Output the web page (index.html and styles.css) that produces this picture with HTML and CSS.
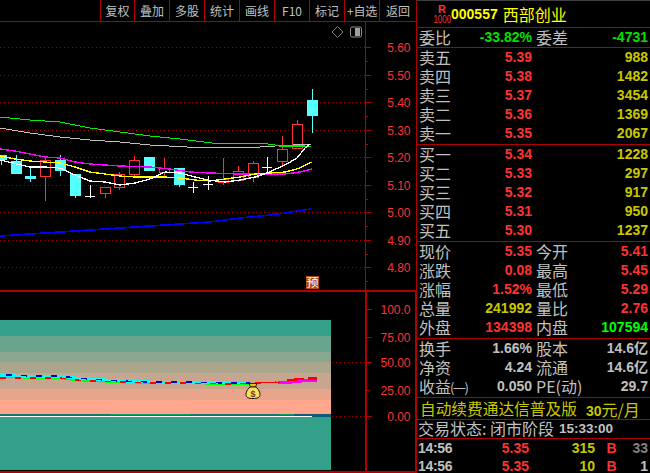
FILE: index.html
```html
<!DOCTYPE html>
<html lang="zh">
<head>
<meta charset="utf-8">
<title>000557 西部创业</title>
<link rel="stylesheet" href="styles.css">
</head>
<body>
<div class="app">
  <section class="main">
    <nav class="toolbar">
      <span class="tool">复权</span><span class="tool">叠加</span><span class="tool">多股</span><span class="tool">统计</span><span class="tool">画线</span><span class="tool">F10</span><span class="tool">标记</span><span class="tool tool-tight">+自选</span><span class="tool">返回</span>
    </nav>
    <svg class="pane price-pane" viewBox="0 22 416 268" width="416" height="268" shape-rendering="crispEdges">
      <path class="grid" d="M0 47.5H365M0 75.5H365M0 102.5H365M0 130.5H365M0 157.5H365M0 185.5H365M0 212.5H365M0 240.5H365M0 267.5H365"/>
      <path class="axis" d="M365.5 22V290"/>
      <path class="axis" d="M366 47.5H371M366 75.5H371M366 102.5H371M366 130.5H371M366 157.5H371M366 185.5H371M366 212.5H371M366 240.5H371M366 267.5H371M366 61.5H368M366 89.5H368M366 116.5H368M366 144.5H368M366 171.5H368M366 199.5H368M366 226.5H368M366 254.5H368M366 281.5H368"/>
      <g class="tick-label">
        <text x="410.500" y="52">5.60</text><text x="410.500" y="80">5.50</text><text x="410.500" y="107">5.40</text><text x="410.500" y="135">5.30</text><text x="410.500" y="162">5.20</text><text x="410.500" y="190">5.10</text><text x="410.500" y="217">5.00</text><text x="410.500" y="245">4.90</text><text x="410.500" y="272">4.80</text>
      </g>

      <g class="wick-c">
        <path d="M1.5 160V165M16.5 155V161M30.5 168V182M60.5 155V176M75.5 196V198M179.5 185V187M312.5 89V133"/>
      </g>
      <g class="body-c">
        <rect x="-4" y="155" width="11" height="5"/><rect x="11" y="161" width="11" height="13"/><rect x="25" y="176" width="11" height="3"/><rect x="55" y="160" width="11" height="11"/><rect x="70" y="174" width="11" height="22"/><rect x="144" y="157" width="11" height="14"/><rect x="174" y="168" width="11" height="17"/><rect x="307" y="100" width="11" height="16"/>
      </g>
      <g class="wick-r">
        <path d="M45.5 157V160M45.5 177V201M105.5 194V198M119.5 172V174M119.5 188V190M134.5 156V160M134.5 175V177M164.5 158V168M164.5 172V177M223.5 158V179M223.5 182V185M238.5 166V171M238.5 180V182M253.5 161V163M253.5 177V182M282.5 136V149M282.5 161V165M297.5 120V124M297.5 148V149"/>
      </g>
      <g class="body-r">
        <rect x="40.5" y="160.5" width="10" height="16"/><rect x="100.5" y="187.5" width="10" height="6"/><rect x="114.5" y="174.5" width="10" height="13"/><rect x="129.5" y="160.5" width="10" height="14"/><rect x="159.5" y="168.5" width="10" height="4"/><rect x="218.5" y="179.5" width="10" height="3"/><rect x="233.5" y="171.5" width="10" height="9"/><rect x="248.5" y="163.5" width="10" height="14"/><rect x="277.5" y="149.5" width="10" height="12"/><rect x="292.5" y="124.5" width="10" height="24"/>
      </g>
      <path class="doji" d="M85 196.5H95M90.5 185V198M188 187.5H198M193.5 182V193M203 184.5H213M208.5 176V190M262 167.5H272M267.5 157V174"/>

      <polyline class="ma ma-gray" points="0,128 30,133 60,137 90,140 120,142 150,145 187,147 260,147 275,146 311,144"/>
      <polyline class="ma ma-green" points="0,117 30,120 60,122 90,128 120,132 150,136 180,139 220,144 230,143 260,143 275,145 290,146 311,147"/>
      <rect class="ma-green-fill" x="279" y="145" width="26" height="2"/>
      <polyline class="ma ma-blue" points="0,236 30,234 60,232 90,230 120,228 150,226 180,224 210,222 240,218 270,215 285,213 311,209"/>
      <polyline class="ma ma-magenta" points="0,149 15,151 30,154 45,157 60,158 75,162 90,164 105,165 120,166 150,167 170,169 190,172 210,173 240,174 285,174 300,172 312,169"/>
      <polyline class="ma ma-yellow" points="0,156 15,159 30,161 45,162 60,163 75,167 90,172 105,174 120,176 135,177 150,177 165,177 180,178 195,180 210,181 225,179 240,177 255,174 270,173 285,172 297,169 312,162"/>
      <polyline class="ma ma-white" points="0,160 30,167 45,167 60,168 75,175 90,181 105,182 120,185 135,183 150,179 165,172 180,173 195,177 208,180 225,182 240,180 255,177 267,173 285,165 297,158 305,148 310,144"/>

      <path class="diamond" d="M337.5 26.500L343 32L337.5 37.500L332 32Z" shape-rendering="auto"/>
      <rect class="toggle" x="350.5" y="27" width="11" height="10" rx="1.5" shape-rendering="auto"/>
      <rect class="toggle-fill" x="355" y="28" width="5" height="8"/>
      <rect class="badge" x="306" y="276" width="13" height="13"/>
      <text class="badge-text" x="312.5" y="287">预</text>
    </svg>
    <svg class="pane ind-pane" viewBox="0 290 416 183" width="416" height="183" shape-rendering="crispEdges">
      <rect class="b1" x="0" y="320" width="331" height="16"/>
      <rect class="b2" x="0" y="336" width="331" height="16"/>
      <rect class="b3" x="0" y="352" width="331" height="10"/>
      <rect class="b4" x="0" y="362" width="331" height="11"/>
      <rect class="b5" x="0" y="373" width="331" height="16"/>
      <rect class="b6" x="0" y="389" width="331" height="11"/>
      <rect class="b7" x="0" y="400" width="331" height="14"/>
      <rect class="b1" x="0" y="414" width="331" height="56"/>
      <rect class="dk" x="0" y="414" width="331" height="2"/>
      <rect class="gr" x="110" y="414" width="80" height="1"/>
      <rect class="gr" x="279" y="414" width="15" height="1"/>
      <rect class="dkb" x="294" y="414" width="37" height="3"/>
      <rect class="wh" x="0" y="416" width="312" height="1"/>

      <polyline class="rb rb-green" points="0,377 15,377 30,378 60,378 75,380 90,381 120,382 150,383 180,383 230,384 250,384"/>
      <polyline class="rb rb-cyan" points="0,375 15,376 30,376 60,376 75,378 90,379 120,381 150,382 180,382 230,383 250,383"/>
      <polyline class="rb-dash rb-red" points="0,378 15,378 30,378 60,378 75,380 90,381 120,382 150,383 180,383 230,384 260,383 280,382"/>
      <polyline class="rb-dash rb-blue" points="6,375 15,375 30,376 60,376 75,378 90,379 120,381 150,382 180,382 230,383 250,383"/>
      <rect class="m" x="278" y="381" width="14" height="3"/>
      <rect class="m" x="292" y="380" width="10" height="3"/>
      <rect class="m" x="302" y="379" width="15" height="3"/>
      <rect class="rd" x="260" y="382" width="20" height="1"/>
      <rect class="rd" x="287" y="379" width="10" height="2"/>
      <rect class="rd" x="294" y="378" width="10" height="2"/>
      <rect class="rd" x="308" y="377" width="9" height="3"/>

      <g class="bag" shape-rendering="auto">
        <path class="bag-neck" d="M249 383.5H257L255.500 387H250.500Z"/>
        <path class="bag-body" d="M250 387H256C259 390 260 392 260 394.500C260 397.500 257.500 398.500 253 398.500C248.500 398.500 246 397.500 246 394.500C246 392 247 390 250 387Z"/>
        <text class="bag-text" x="253" y="396.500">$</text>
      </g>

      <path class="grid" d="M332 362.500H365M332 416.500H365"/>
      <path class="frame" d="M0 291H416M0 472H416M366 290V473M416 290V473"/>
      <path class="axis" d="M367 309.500H372M367 337.500H372M367 362.500H372M367 390.500H369M367 416.500H372"/>
      <g class="tick-label">
        <text x="410.500" y="314">100.0</text><text x="410.500" y="342">75.00</text><text x="410.500" y="367">50.00</text><text x="410.500" y="395">25.00</text><text x="410.500" y="421">0.00</text>
      </g>
    </svg>
  </section>

  <aside class="panel">
    <header class="head">
      <div class="mark"><span class="mark-r">R</span><span class="mark-n">1000</span></div>
      <span class="code">000557</span><span class="name">西部创业</span>
    </header>
    <div class="block quad ratio">
      <span class="lab">委比</span><span class="val green">-33.82%</span><span class="lab lab2">委差</span><span class="val green">-4731</span>
    </div>
    <div class="block book">
      <span class="lab">卖五</span><span class="val red">5.39</span><span class="val yel">988</span>
      <span class="lab">卖四</span><span class="val red">5.38</span><span class="val yel">1482</span>
      <span class="lab">卖三</span><span class="val red">5.37</span><span class="val yel">3454</span>
      <span class="lab">卖二</span><span class="val red">5.36</span><span class="val yel">1369</span>
      <span class="lab">卖一</span><span class="val red">5.35</span><span class="val yel">2067</span>
    </div>
    <div class="block book">
      <span class="lab">买一</span><span class="val red">5.34</span><span class="val yel">1228</span>
      <span class="lab">买二</span><span class="val red">5.33</span><span class="val yel">297</span>
      <span class="lab">买三</span><span class="val red">5.32</span><span class="val yel">917</span>
      <span class="lab">买四</span><span class="val red">5.31</span><span class="val yel">950</span>
      <span class="lab">买五</span><span class="val red">5.30</span><span class="val yel">1237</span>
    </div>
    <div class="block quad">
      <span class="lab">现价</span><span class="val red">5.35</span><span class="lab lab2">今开</span><span class="val red">5.41</span>
      <span class="lab">涨跌</span><span class="val red">0.08</span><span class="lab lab2">最高</span><span class="val red">5.45</span>
      <span class="lab">涨幅</span><span class="val red">1.52%</span><span class="lab lab2">最低</span><span class="val red">5.29</span>
      <span class="lab">总量</span><span class="val yel">241992</span><span class="lab lab2">量比</span><span class="val red">2.76</span>
      <span class="lab">外盘</span><span class="val red">134398</span><span class="lab lab2">内盘</span><span class="val lime">107594</span>
    </div>
    <div class="block quad">
      <span class="lab">换手</span><span class="val gry">1.66%</span><span class="lab lab2">股本</span><span class="val gry">14.6亿</span>
      <span class="lab">净资</span><span class="val gry">4.24</span><span class="lab lab2">流通</span><span class="val gry">14.6亿</span>
      <span class="lab">收益<span class="lab-small">(一)</span></span><span class="val gry">0.050</span><span class="lab lab2">PE(动)</span><span class="val gry">29.7</span>
    </div>
    <div class="block promo"><span class="promo-text">自动续费通达信普及版</span><span class="promo-price"><b class="promo-num">30</b>元/月</span></div>
    <div class="block state"><span>交易状态: 闭市阶段</span><span class="state-time">15:33:00</span></div>
    <div class="trades">
      <span class="t-time">14:56</span><span class="val red">5.35</span><span class="val yel">315</span><span class="t-bs">B</span><span class="t-n">33</span>
      <span class="t-time">14:56</span><span class="val red">5.35</span><span class="val yel">10</span><span class="t-bs">B</span><span class="t-n t-n-light">1</span>
    </div>
  </aside>
</div>
</body>
</html>
```
FILE: styles.css
```css
* { box-sizing: border-box; }
html, body { margin: 0; padding: 0; background: #000; }
body { width: 650px; height: 473px; overflow: hidden; font-family: "Liberation Sans", "Noto Sans CJK SC", sans-serif; }
.app { display: flex; width: 650px; height: 473px; background: #000; }

.main { width: 416px; flex: none; display: flex; flex-direction: column; }
.toolbar { height: 22px; flex: none; display: flex; justify-content: flex-end; border-bottom: 1px solid #b00000; }
.tool { width: 35px; height: 21px; display: flex; align-items: center; justify-content: center; border-left: 1px solid #b00000; color: #c0c0c0; font: 400 12px "Noto Sans CJK SC", sans-serif; }
.tool:first-child { width: 34px; }
.tool:last-child { width: 37px; }
.tool-tight { letter-spacing: -0.3px; }
.pane { display: block; flex: none; }

.grid { stroke: #a00000; stroke-width: 1; stroke-dasharray: 1 3; fill: none; }
.axis { stroke: #b00000; stroke-width: 1; fill: none; }
.frame { stroke: #b00000; stroke-width: 2; fill: none; }
.tick-label text { fill: #ff3232; font: 400 12px "Liberation Sans", sans-serif; text-anchor: end; }
.wick-c { stroke: #54ffff; fill: none; }
.body-c { fill: #54ffff; }
.wick-r { stroke: #ff3232; fill: none; }
.body-r { stroke: #ff3232; fill: #000; stroke-width: 1; }
.doji { stroke: #fff; fill: none; }
.ma { fill: none; stroke-width: 1; }
.ma-gray { stroke: #c0c0c0; }
.ma-green { stroke: #00f000; }
.ma-green-fill { fill: #00f000; }
.ma-blue { stroke: #0000ff; stroke-width: 1.6; }
.ma-magenta { stroke: #ff00ff; stroke-width: 1.4; }
.ma-yellow { stroke: #ffff00; stroke-width: 1.3; }
.ma-white { stroke: #fff; stroke-width: 1.3; }
.diamond { fill: none; stroke: #808080; }
.toggle { fill: #000; stroke: #909090; }
.toggle-fill { fill: #a0a0a0; }
.badge { fill: #b04a10; }
.badge-text { fill: #fff; font: 400 12px "Noto Sans CJK SC", sans-serif; text-anchor: middle; }

.b1 { fill: #33a18a; }
.b2 { fill: #69a58c; }
.b3 { fill: #88a690; }
.b4 { fill: #a9a68c; }
.b5 { fill: #c6a68e; }
.b6 { fill: #e8a58c; }
.b7 { fill: #ffa68c; }
.dk { fill: #0f7a68; }
.gr { fill: #00a060; }
.dkb { fill: #0f5a78; }
.wh { fill: #fff; }
.rb { fill: none; stroke-width: 2; }
.rb-green { stroke: #00ff00; }
.rb-cyan { stroke: #00ffff; stroke-width: 3; }
.rb-dash { fill: none; stroke-width: 1.5; stroke-dasharray: 6 9; }
.rb-red { stroke: #ff0000; }
.rb-blue { stroke: #0000d0; }
.m { fill: #ff00ff; }
.rd { fill: #ff0000; }
.bag-neck { fill: #e8c020; stroke: #402000; stroke-width: 1; }
.bag-body { fill: #f8e060; stroke: #201000; stroke-width: 1; }
.bag-text { fill: #703828; font: 700 9px "Liberation Sans", sans-serif; text-anchor: middle; }

.panel { flex: 1; min-width: 0; display: flex; flex-direction: column; border-left: 1px solid #b00000; border-top: 1px solid #404040; color: #c0c0c0; }
.head { height: 27px; flex: none; display: flex; align-items: center; border-bottom: 1px solid #b00000; padding-left: 16px; }
.mark { width: 18px; display: flex; flex-direction: column; align-items: center; color: #ff3232; }
.mark-r { font: 700 11px/10px "Liberation Sans", sans-serif; }
.mark-n { font: 400 11px/10px "Liberation Sans", sans-serif; display: inline-block; transform: scaleX(0.72); }
.code { font: 700 14px "Liberation Sans", sans-serif; color: #ffff00; }
.name { font: 400 16px "Noto Sans CJK SC", sans-serif; color: #ffff00; margin-left: 5px; }

.block { flex: none; border-bottom: 1px solid #b00000; }
.lab { font: 400 16px/19px "Noto Sans CJK SC", sans-serif; color: #c0c0c0; white-space: nowrap; }
.lab2 { padding-left: 4px; }
.lab-small { font-size: 13px; letter-spacing: -1.5px; margin-left: -1px; }
.val { font: 700 14px/19px "Liberation Sans", "Noto Sans CJK SC", sans-serif; text-align: right; white-space: nowrap; }
.red { color: #ff3232; }
.green { color: #00e000; }
.lime { color: #00ff00; }
.yel { color: #c8c800; }
.gry { color: #c0c0c0; }
.ratio { height: 20px; }
.quad { display: grid; grid-template-columns: 50px 63px 48px 1fr; grid-auto-rows: 19px; padding: 0 2px; }
.block.quad:not(.ratio) { padding-bottom: 1px; }
.book { display: grid; grid-template-columns: 50px 63px 1fr; grid-auto-rows: 19px; padding: 0 2px; height: 97px; }
.promo { height: 22px; display: flex; align-items: center; padding-left: 3px; color: #c8c800; white-space: nowrap; }
.promo-text { font: 400 15.7px "Noto Sans CJK SC", sans-serif; }
.promo-price { margin-left: 9px; font: 400 16px "Noto Sans CJK SC", sans-serif; }
.promo-num { font: 700 14px "Liberation Sans", sans-serif; }
.state { height: 19px; padding: 0 0 2px 1px; display: flex; align-items: center; color: #c0c0c0; font: 400 16px "Noto Sans CJK SC", sans-serif; white-space: nowrap; }
.state-time { margin-left: 5px; font: 700 13.500px "Liberation Sans", sans-serif; }
.trades { display: grid; grid-template-columns: 37px 74px 66px 25px 1fr; grid-auto-rows: 18px; padding: 0 2px 0 1px; }
.t-time { font: 700 14px/18px "Liberation Sans", sans-serif; color: #c0c0c0; letter-spacing: -0.3px; }
.trades .val { line-height: 18px; }
.t-bs { font: 700 14px/18px "Liberation Sans", sans-serif; color: #ff3232; text-align: center; padding-left: 8px; }
.t-n { font: 700 14px/18px "Liberation Sans", sans-serif; color: #808080; text-align: right; }
.t-n-light { color: #c0c0c0; }
```
